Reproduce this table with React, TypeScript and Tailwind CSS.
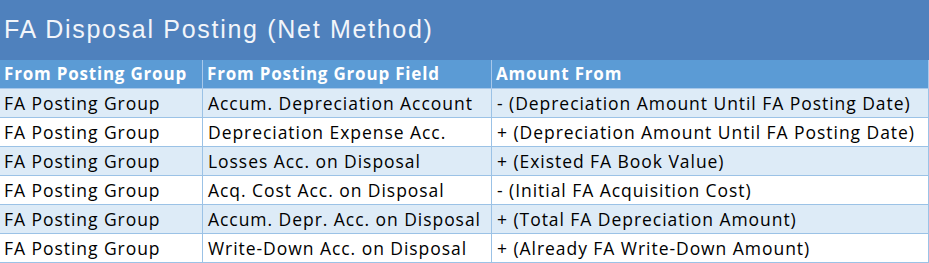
const rows = [
  ['FA Posting Group', 'Accum. Depreciation Account', '- (Depreciation Amount Until FA Posting Date)'],
  ['FA Posting Group', 'Depreciation Expense Acc.', '+ (Depreciation Amount Until FA Posting Date)'],
  ['FA Posting Group', 'Losses Acc. on Disposal', '+ (Existed FA Book Value)'],
  ['FA Posting Group', 'Acq. Cost Acc. on Disposal', '- (Initial FA Acquisition Cost)'],
  ['FA Posting Group', 'Accum. Depr. Acc. on Disposal', '+ (Total FA Depreciation Amount)'],
  ['FA Posting Group', 'Write-Down Acc. on Disposal', '+ (Already FA Write-Down Amount)'],
]

const headers = ['From Posting Group', 'From Posting Group Field', 'Amount From']

export default function App() {
  return (
    <div className="w-[929px] bg-white font-['Open_Sans',sans-serif]">
      <div className="flex h-[60px] items-center bg-[#4f81bd] px-1">
        <h1 className="font-['Liberation_Sans',sans-serif] text-[25px] tracking-[1.7px] text-[#f2f5fa]">
          FA Disposal Posting (Net Method)
        </h1>
      </div>
      <div className="grid grid-cols-[203px_289px_437px]">
        {headers.map(h => (
          <div
            key={h}
            className="flex h-[29px] items-center border-r border-b border-[#a8c8ea] bg-[#5b9bd5] px-1 text-[17px] font-bold tracking-[0.8px] text-white"
          >
            {h}
          </div>
        ))}
        {rows.map((row, i) =>
          row.map((cell, j) => (
            <div
              key={`${i}-${j}`}
              className={`flex h-[29px] items-center border-r border-b border-[#9bc2e6] text-[17.5px] tracking-[0.95px] text-black ${
                j === 0 ? 'px-1' : 'px-[5px]'
              } ${i % 2 === 0 ? 'bg-[#ddebf7]' : 'bg-white'}`}
            >
              {cell}
            </div>
          )),
        )}
      </div>
    </div>
  )
}
